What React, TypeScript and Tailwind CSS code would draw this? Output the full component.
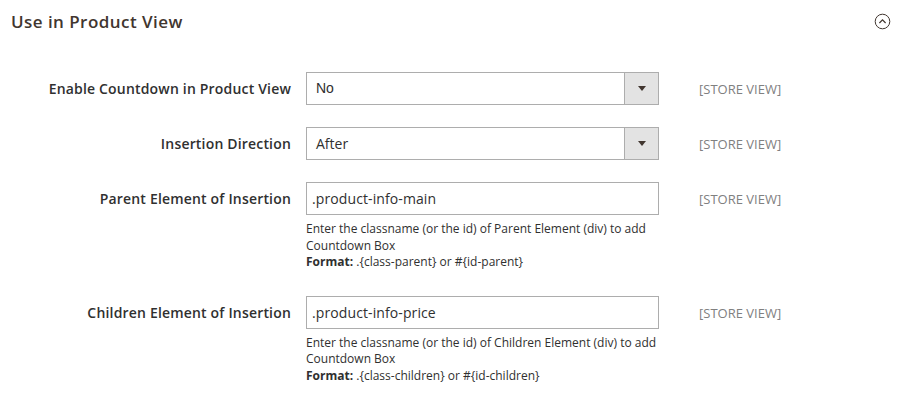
import React from 'react';

const font = { fontFamily: "'Open Sans', 'Liberation Sans', sans-serif" };

const Scope: React.FC = () => (
  <div className="ml-[40px] h-[33px] leading-[34px] text-[13px] text-[#808080] uppercase">[Store View]</div>
);

const Label: React.FC<{ text: string }> = ({ text }) => (
  <label className="w-[291px] shrink-0 text-right text-[14px] font-semibold tracking-[0.18px] text-[#303030] leading-[33px] mr-[15px]">
    {text}
  </label>
);

const Select: React.FC<{ value: string; arial?: boolean }> = ({ value, arial }) => (
  <div className="w-[353px] h-[33px] border border-[#adadad] bg-white flex items-stretch">
    <div
      className="flex-1 pl-[9px] text-[14px] text-[#303030] leading-[31px]"
      style={arial ? { fontFamily: "'Liberation Sans', Arial, sans-serif" } : undefined}
    >
      {value}
    </div>
    <div className="w-[34px] border-l border-[#adadad] bg-[#e3e3e3] flex items-center justify-center">
      <div className="w-0 h-0 border-l-[4px] border-r-[4px] border-t-[5px] border-l-transparent border-r-transparent border-t-[#41362f]" />
    </div>
  </div>
);

const Input: React.FC<{ value: string; notes: string[]; format: string }> = ({ value, notes, format }) => (
  <div className="w-[353px]">
    <div className="h-[33px] border border-[#adadad] bg-white pl-[5px] text-[14px] tracking-[0.1px] text-[#303030] leading-[31px]">
      {value}
    </div>
    <div className="mt-[6px] text-[12px] leading-[16.5px] text-[#303030]">
      {notes.map((n) => (
        <div key={n}>{n}</div>
      ))}
      <div>
        <span className="font-bold">Format:</span> {format}
      </div>
    </div>
  </div>
);

const App: React.FC = () => {
  return (
    <div className="w-[905px] h-[396px] bg-white overflow-hidden" style={font}>
      {/* Section header */}
      <div className="flex items-center justify-between pl-[11px] pr-[14px] pt-[8px] h-[40px]">
        <h2 className="text-[17px] font-semibold text-[#41362f] tracking-[0.45px] -mt-[5px]">Use in Product View</h2>
        <svg width="17" height="17" viewBox="0 0 17 17" className="-mt-[5px]">
          <circle cx="8.5" cy="8.5" r="7.3" fill="none" stroke="#41362f" strokeWidth="1" />
          <path d="M5.4 10 L8.5 6.9 L11.6 10" fill="none" stroke="#41362f" strokeWidth="1.2" />
        </svg>
      </div>

      {/* Fields */}
      <div className="pt-[32px] flex flex-col">
        <div className="flex items-start">
          <Label text="Enable Countdown in Product View" />
          <Select value="No" arial />
          <Scope />
        </div>
        <div className="flex items-start mt-[22px]">
          <Label text="Insertion Direction" />
          <Select value="After" />
          <Scope />
        </div>
        <div className="flex items-start mt-[22px]">
          <Label text="Parent Element of Insertion" />
          <Input
            value=".product-info-main"
            notes={['Enter the classname (or the id) of Parent Element (div) to add', 'Countdown Box']}
            format=".{class-parent} or #{id-parent}"
          />
          <Scope />
        </div>
        <div className="flex items-start mt-[25px]">
          <Label text="Children Element of Insertion" />
          <Input
            value=".product-info-price"
            notes={['Enter the classname (or the id) of Children Element (div) to add', 'Countdown Box']}
            format=".{class-children} or #{id-children}"
          />
          <Scope />
        </div>
      </div>
    </div>
  );
};

export default App;
